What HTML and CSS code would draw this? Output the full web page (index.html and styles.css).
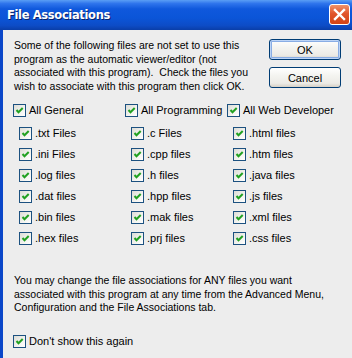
FILE: index.html
```html
<!DOCTYPE html>
<html lang="en">

<head>
    <meta charset="UTF-8">
    <title>File Associations</title>
    <link rel="stylesheet" href="styles.css">
</head>

<body>
    <div class="titlebar">
        <span class="title">File Associations</span>
        <span class="close">
            <svg width="21" height="21" viewBox="0 0 21 21">
                <path d="M6 6 L15 15 M15 6 L6 15" stroke="#fff" stroke-width="2.4" stroke-linecap="square" />
            </svg>
        </span>
    </div>

    <div class="window">
        <div class="top">
            <p class="intro">Some of the following files are not set to use this<br>
                program as the automatic viewer/editor (not<br>
                associated with this program).&nbsp; Check the files you<br>
                wish to associate with this program then click OK.</p>
            <div class="buttons">
                <button class="btn default">OK</button>
                <button class="btn">Cancel</button>
            </div>
        </div>

        <div class="groups">
            <div class="group col1">
                <label class="row head"><span class="cb"></span>All General</label>
                <label class="row item"><span class="cb"></span>.txt Files</label>
                <label class="row item"><span class="cb"></span>.ini Files</label>
                <label class="row item"><span class="cb"></span>.log files</label>
                <label class="row item"><span class="cb"></span>.dat files</label>
                <label class="row item"><span class="cb"></span>.bin files</label>
                <label class="row item"><span class="cb"></span>.hex files</label>
            </div>
            <div class="group col2">
                <label class="row head"><span class="cb"></span>All Programming</label>
                <label class="row item"><span class="cb"></span>.c Files</label>
                <label class="row item"><span class="cb"></span>.cpp files</label>
                <label class="row item"><span class="cb"></span>.h files</label>
                <label class="row item"><span class="cb"></span>.hpp files</label>
                <label class="row item"><span class="cb"></span>.mak files</label>
                <label class="row item"><span class="cb"></span>.prj files</label>
            </div>
            <div class="group col3">
                <label class="row head"><span class="cb"></span>All Web Developer</label>
                <label class="row item"><span class="cb"></span>.html files</label>
                <label class="row item"><span class="cb"></span>.htm files</label>
                <label class="row item"><span class="cb"></span>.java files</label>
                <label class="row item"><span class="cb"></span>.js files</label>
                <label class="row item"><span class="cb"></span>.xml files</label>
                <label class="row item"><span class="cb"></span>.css files</label>
            </div>
        </div>

        <p class="note">You may change the file associations for ANY files you want<br>
            associated with this program at any time from the Advanced Menu,<br>
            Configuration and the File Associations tab.</p>

        <label class="row dontshow"><span class="cb"></span>Don't show this again</label>
    </div>
</body>

</html>
```

FILE: styles.css
```css
body {
    margin: 0;
    width: 352px;
    height: 358px;
    overflow: hidden;
    font-family: "Liberation Sans", Arial, sans-serif;
    font-size: 10.5px;
    color: #000;
    background: #ededed;
}

.titlebar {
    height: 30px;
    display: flex;
    align-items: center;
    justify-content: space-between;
    padding-left: 7px;
    box-sizing: border-box;
    background: linear-gradient(to bottom, #5a9ef5 0%, #2e74ec 12%, #0f58dc 30%, #0b55d8 60%, #0d4cc6 85%, #0a3ea8 100%);
}

.title {
    color: #fff;
    font-family: "DejaVu Sans", Verdana, sans-serif;
    font-weight: bold;
    font-size: 11.5px;
    letter-spacing: -0.35px;
    text-shadow: 1px 1px 0 #0a246a;
}

.close {
    width: 21px;
    height: 21px;
    margin-right: 2px;
    margin-top: -2px;
    box-sizing: border-box;
    border: 1px solid #fff;
    border-radius: 3px;
    background: linear-gradient(to bottom, #f0936a 0%, #e1552c 45%, #d24314 100%);
    display: flex;
    align-items: center;
    justify-content: center;
}

.close svg {
    display: block;
    margin: -1px;
}

.window {
    border-left: 3px solid #0b47c9;
    height: 328px;
    padding: 9px 0 0 11px;
    box-sizing: border-box;
}

.top {
    display: grid;
    grid-template-columns: 255px 72px;
}

.intro, .note {
    margin: 0;
    line-height: 13.7px;
    white-space: nowrap;
}

.buttons {
    display: flex;
    flex-direction: column;
    gap: 7px;
}

.btn {
    width: 72px;
    height: 21px;
    padding: 0;
    font-family: "Liberation Sans", Arial, sans-serif;
    font-size: 11px;
    color: #000;
    border: 1px solid #003c74;
    border-radius: 3px;
    background: linear-gradient(to bottom, #ffffff 0%, #f4f4f0 40%, #ecebe6 80%, #d6d0c5 100%);
}

.btn.default {
    box-shadow: inset 0 0 0 1px #bcd4f6, inset 0 0 0 2px #89ade4;
}

.groups {
    display: flex;
    margin-top: 6px;
    font-size: 11px;
}

.group {
    display: flex;
    flex-direction: column;
}

.col1 {
    width: 112px;
}

.col2 {
    width: 102px;
}

.row {
    display: flex;
    align-items: center;
    height: 21px;
}

.head {
    margin-bottom: 2px;
    margin-left: -1px;
}

.item {
    margin-left: 5px;
}

.cb {
    width: 13px;
    height: 13px;
    box-sizing: border-box;
    border: 1px solid #1c5180;
    margin-right: 3px;
    background-color: #f4f4f0;
    background-image: url("data:image/svg+xml,%3Csvg xmlns='http://www.w3.org/2000/svg' width='11' height='11' viewBox='0 0 11 11'%3E%3Cpath d='M2.5 5 L4.5 7.2 L8.7 3' fill='none' stroke='%2321a121' stroke-width='2'/%3E%3C/svg%3E"), linear-gradient(135deg, #dcdcd6 0%, #f4f4f0 60%, #ffffff 100%);
}

.note {
    margin-top: 25px;
}

.dontshow {
    margin-top: 16px;
    margin-left: -1px;
    font-size: 11px;
}
```
